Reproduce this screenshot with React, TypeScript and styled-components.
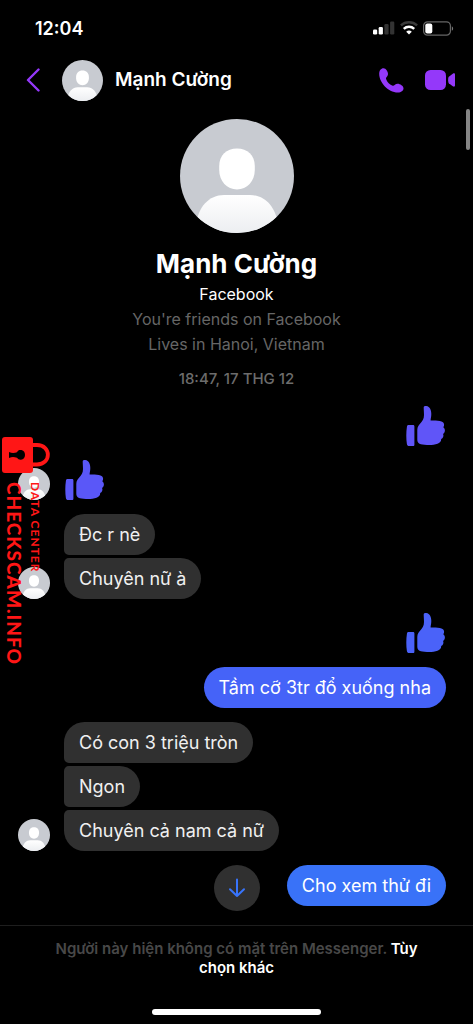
import React from "react";
import styled, { createGlobalStyle, css } from "styled-components";

const GlobalStyle = createGlobalStyle`
  *, *::before, *::after { box-sizing: border-box; }
  body {
    margin: 0;
    background: #000;
    color: #fff;
    font-family: Inter, "Noto Sans", sans-serif;
  }
  button { padding: 0; border: 0; background: none; font: inherit; color: inherit; cursor: pointer; }
  h1, h2, p { margin: 0; }
  svg { display: block; }
`;

const Screen = styled.div`
  position: relative;
  min-height: 100vh;
  display: flex;
  flex-direction: column;
  background: #000;
`;

const StatusBar = styled.div`
  display: flex;
  align-items: center;
  justify-content: space-between;
  height: 56px;
  padding: 0 19px 0 35px;
`;

const Clock = styled.time`
  font-size: 18px;
  font-weight: 600;
`;

const StatusIcons = styled.div`
  display: flex;
  align-items: center;
  gap: 5px;
`;

const Header = styled.header`
  display: flex;
  align-items: center;
  height: 48px;
  padding: 0 18px 0 26px;
`;

const IconButton = styled.button`
  display: flex;
  color: #9438fa;
`;

const HeaderPerson = styled.div`
  flex: 1;
  display: flex;
  align-items: center;
  gap: 12px;
  margin-left: 22px;
`;

const HeaderName = styled.h1`
  font-size: 19px;
  line-height: 24px;
  font-weight: 600;
`;

const HeaderActions = styled.div`
  display: flex;
  align-items: center;
  gap: 21px;
`;

const AvatarSvg = styled.svg<{ $size: number }>`
  flex: none;
  width: ${(p) => p.$size}px;
  height: ${(p) => p.$size}px;
  border-radius: 50%;
`;

const Conversation = styled.main`
  position: relative;
  flex: 1;
  padding-bottom: 19px;
`;

const Profile = styled.section`
  display: flex;
  flex-direction: column;
  align-items: center;
  padding-top: 15px;
  text-align: center;
`;

const ProfileName = styled.h2`
  margin-top: 13px;
  font-size: 26px;
  line-height: 36px;
  font-weight: 700;
`;

const ProfileLine = styled.p<{ $muted?: boolean }>`
  font-size: 16px;
  line-height: 25px;
  color: ${(p) => (p.$muted ? "#666" : "#fff")};
`;

const DateStamp = styled.time`
  margin-top: 12px;
  font-size: 15px;
  line-height: 20px;
  font-weight: 500;
  color: #6c6c6c;
`;

const Thread = styled.div`
  display: flex;
  flex-direction: column;
  gap: 14px;
  margin-top: 17px;
  padding: 0 27px 0 18px;
`;

const Incoming = styled.div`
  display: flex;
  align-items: flex-end;
  gap: 14px;
`;

const Outgoing = styled.div`
  display: flex;
  justify-content: flex-end;
`;

const Stack = styled.div`
  display: flex;
  flex-direction: column;
  align-items: flex-start;
  gap: 3px;
`;

const Bubble = styled.p<{ $tone?: string; $joinTop?: boolean; $joinBottom?: boolean }>`
  padding: 8px 15px;
  border-radius: 21px;
  font-size: 18px;
  line-height: 25px;
  background: ${(p) => p.$tone ?? "#303030"};
  color: ${(p) => (p.$tone ? "#fff" : "#f0f0f0")};
  ${(p) => p.$joinTop && css`border-top-left-radius: 5px;`}
  ${(p) => p.$joinBottom && css`border-bottom-left-radius: 5px;`}
`;

const ScrollDown = styled.button`
  position: absolute;
  bottom: 14px;
  left: 50%;
  transform: translateX(-50%);
  display: flex;
  align-items: center;
  justify-content: center;
  width: 46px;
  height: 46px;
  border-radius: 50%;
  background: #303030;
  color: #3874fb;
`;

const ScrollThumb = styled.div`
  position: absolute;
  top: 109px;
  right: 3px;
  width: 4px;
  height: 41px;
  border-radius: 2px;
  background: #858585;
`;

const Footer = styled.footer`
  display: flex;
  flex-direction: column;
  align-items: center;
  justify-content: space-between;
  min-height: 99px;
  padding: 13px 48px 9px;
  border-top: 1px solid #1e1e1e;
`;

const Notice = styled.p`
  font-size: 15px;
  line-height: 19px;
  font-weight: 600;
  text-align: center;
  color: #484848;
`;

const OptionsLink = styled.a`
  color: #fff;
  text-decoration: none;
`;

const HomeIndicator = styled.div`
  width: 169px;
  height: 6px;
  border-radius: 3px;
  background: #fff;
`;

const Watermark = styled.div`
  position: absolute;
  top: 437px;
  left: 2px;
  display: flex;
  flex-direction: column;
  gap: 9px;
  color: #ff1616;
  font-family: Lato, sans-serif;
  pointer-events: none;
`;

const WatermarkText = styled.div`
  align-self: flex-start;
  writing-mode: vertical-rl;
  display: flex;
  flex-direction: column;
`;

const WatermarkSite = styled.span`
  font-size: 19px;
  line-height: 24px;
  font-weight: 900;
  letter-spacing: 1px;
`;

const WatermarkTag = styled.span`
  font-size: 12px;
  line-height: 18px;
  font-weight: 700;
  letter-spacing: 1px;
`;

function Avatar({ size }: { size: number }) {
  const id = React.useId();
  return (
    <AvatarSvg $size={size} viewBox="0 0 114 114" role="img" aria-label="Mạnh Cường">
      <defs>
        <linearGradient id={id} x1="0" y1="0" x2="0" y2="1">
          <stop offset="0" stopColor="#fff" />
          <stop offset="1" stopColor="#eceef1" />
        </linearGradient>
      </defs>
      <rect width="114" height="114" fill="#c8cbd1" />
      <path
        d="M57 29.500C67.500 29.500 74.800 36.500 74.800 47V51C74.800 62 67 70.500 57 70.500C47 70.500 39.200 62 39.200 51V47C39.200 36.500 46.500 29.500 57 29.500Z"
        fill="#fff"
      />
      <path d="M16 106C18 88 29 76 44 76H70C85 76 96 88 98 106V114H16Z" fill={`url(#${id})`} />
    </AvatarSvg>
  );
}

function Like({ color }: { color: string }) {
  return (
    <svg width="41" height="40" viewBox="-1 0 41 40" fill={color} role="img" aria-label="Like">
      <path d="M2.600 19H7C8 19 8.400 19.500 8.400 20.500V38.500C8.400 39.500 8 40 7 40H3.200C1.800 40 1.200 39.400 .9 38C.1 33 .1 26 .9 21C1.100 19.600 1.500 19 2.600 19Z" />
      <path d="M17.700 1.500C17.700 .4 19 0 20.300 .1C24 .6 25.300 4.500 25.300 8C25.300 11 24.600 12.500 24.600 14.600C29 14.400 33 14.700 35.500 15.600C38.500 16.800 38.600 19.300 37.300 21.300C39.500 23 39.500 26.400 37.100 28C38 30.200 37 32.200 35.200 33C35.400 35.600 33.500 37 31.500 37.800C29 38.900 25 39.100 21 39C14 38.800 11.300 37.500 11.300 33.500V24C11.300 17.500 18 17 18 9C18 6 17.700 4 17.700 1.500Z" />
    </svg>
  );
}

function SignalIcon() {
  return (
    <svg width="22" height="14" viewBox="0 0 22 14" fill="#fff" aria-hidden="true">
      <rect x="0" y="8.500" width="4.200" height="5" rx="1.200" />
      <rect x="5.700" y="6" width="4.200" height="7.500" rx="1.200" />
      <rect x="11.400" y="3" width="4.200" height="10.500" rx="1.200" fill="#333" />
      <rect x="17.100" y="0.500" width="4.200" height="13" rx="1.200" fill="#333" />
    </svg>
  );
}

function WifiIcon() {
  return (
    <svg width="18" height="14" viewBox="0 0 18 14" fill="none" aria-hidden="true">
      <path d="M.9 4.400C5.500 .2 12.500 .2 17.100 4.400" stroke="#3a3a3a" strokeWidth="2.400" />
      <path d="M3.800 7.900C6.800 5.100 11.200 5.100 14.200 7.900" stroke="#fff" strokeWidth="2.500" />
      <path d="M6.200 10.700C7.900 9.200 10.100 9.200 11.800 10.700L9 13.600Z" fill="#fff" />
    </svg>
  );
}

function BatteryIcon() {
  return (
    <svg width="31" height="15" viewBox="0 0 31 15" fill="none" aria-hidden="true">
      <rect x=".6" y=".8" width="26.800" height="13.400" rx="4" stroke="#666" strokeWidth="1.200" />
      <rect x="2.300" y="2.500" width="7" height="10" rx="2" fill="#fff" />
      <path d="M28.800 5.200C30.600 6 30.600 9 28.800 9.800Z" fill="#777" />
    </svg>
  );
}

function LockIcon() {
  return (
    <svg width="49" height="36" viewBox="0 0 49 36" aria-hidden="true">
      <path d="M29 8H35C49.500 8 49.500 27.500 35 27.500H29" fill="none" stroke="#ff1616" strokeWidth="3.800" />
      <rect width="31" height="36" rx="3" fill="#ff1616" />
      <path
        d="M7 15C10 16.500 13 15.900 15 15.300C16 12.500 18 12.900 19.500 13C22 13.500 23 15.500 23 18C23 20.500 21.500 22.500 19 22.700C17 22.800 16 22 15 20.700C12 20 10 19.700 7 21Z"
        fill="#000"
      />
    </svg>
  );
}

export default function App() {
  return (
    <>
      <GlobalStyle />
      <Screen>
        <StatusBar>
          <Clock>12:04</Clock>
          <StatusIcons>
            <SignalIcon />
            <WifiIcon />
            <BatteryIcon />
          </StatusIcons>
        </StatusBar>

        <Header>
          <IconButton type="button" aria-label="Back">
            <svg width="14" height="24" viewBox="0 0 14 24" fill="none">
              <path d="M12.500 1.500L2 12L12.500 22.500" stroke="currentColor" strokeWidth="2.400" strokeLinecap="round" strokeLinejoin="round" />
            </svg>
          </IconButton>
          <HeaderPerson>
            <Avatar size={41} />
            <HeaderName>Mạnh Cường</HeaderName>
          </HeaderPerson>
          <HeaderActions>
            <IconButton type="button" aria-label="Call">
              <svg width="25" height="25" viewBox="0 0 25 25" fill="currentColor">
                <path d="M.2 6C.2 2.500 2 .3 4.500 .3C7 .3 9 3.700 9 6C9 8.500 6.600 9 7.100 11C8 13.800 11 17 13.700 17.700C15.400 18 16 15.700 18.700 15.700C21 15.700 24.500 18 24.500 20.200C24.500 22.700 22 24.500 19 24.500C8.500 24.500 .2 14 .2 6Z" />
              </svg>
            </IconButton>
            <IconButton type="button" aria-label="Video call">
              <svg width="30" height="20" viewBox="0 0 30 20" fill="currentColor">
                <rect width="21" height="20" rx="5.500" />
                <path d="M23.800 6.700L27.800 3.800C29 3 30 3.300 30 4.700V15.300C30 16.700 29 17 27.800 16.200L23.800 13.300C22.900 12.500 22.900 7.500 23.800 6.700Z" />
              </svg>
            </IconButton>
          </HeaderActions>
        </Header>

        <Conversation>
          <Profile>
            <Avatar size={114} />
            <ProfileName>Mạnh Cường</ProfileName>
            <ProfileLine>Facebook</ProfileLine>
            <ProfileLine $muted>You're friends on Facebook</ProfileLine>
            <ProfileLine $muted>Lives in Hanoi, Vietnam</ProfileLine>
            <DateStamp>18:47, 17 THG 12</DateStamp>
          </Profile>

          <Thread>
            <Outgoing>
              <Like color="#6055f8" />
            </Outgoing>
            <Incoming>
              <Avatar size={32} />
              <Like color="#5a57f8" />
            </Incoming>
            <Incoming>
              <Avatar size={32} />
              <Stack>
                <Bubble $joinBottom>Đc r nè</Bubble>
                <Bubble $joinTop>Chuyên nữ à</Bubble>
              </Stack>
            </Incoming>
            <Outgoing>
              <Like color="#4a62f9" />
            </Outgoing>
            <Outgoing>
              <Bubble $tone="#4563f8">Tầm cỡ 3tr đổ xuống nha</Bubble>
            </Outgoing>
            <Incoming>
              <Avatar size={32} />
              <Stack>
                <Bubble $joinBottom>Có con 3 triệu tròn</Bubble>
                <Bubble $joinTop $joinBottom>Ngon</Bubble>
                <Bubble $joinTop>Chuyên cả nam cả nữ</Bubble>
              </Stack>
            </Incoming>
            <Outgoing>
              <Bubble $tone="#3972f8">Cho xem thử đi</Bubble>
            </Outgoing>
          </Thread>

          <ScrollDown type="button" aria-label="Scroll to latest">
            <svg width="18" height="20" viewBox="0 0 18 20" fill="none" stroke="currentColor" strokeWidth="2" strokeLinecap="round" strokeLinejoin="round">
              <path d="M9 1.500V18M2 11.200L9 18L16 11.200" />
            </svg>
          </ScrollDown>
        </Conversation>

        <Footer>
          <Notice>
            Người này hiện không có mặt trên Messenger. <OptionsLink href="#options">Tùy chọn khác</OptionsLink>
          </Notice>
          <HomeIndicator />
        </Footer>

        <ScrollThumb />
        <Watermark>
          <LockIcon />
          <WatermarkText>
            <WatermarkTag>DATA CENTER</WatermarkTag>
            <WatermarkSite>CHECKSCAM.INFO</WatermarkSite>
          </WatermarkText>
        </Watermark>
      </Screen>
    </>
  );
}
